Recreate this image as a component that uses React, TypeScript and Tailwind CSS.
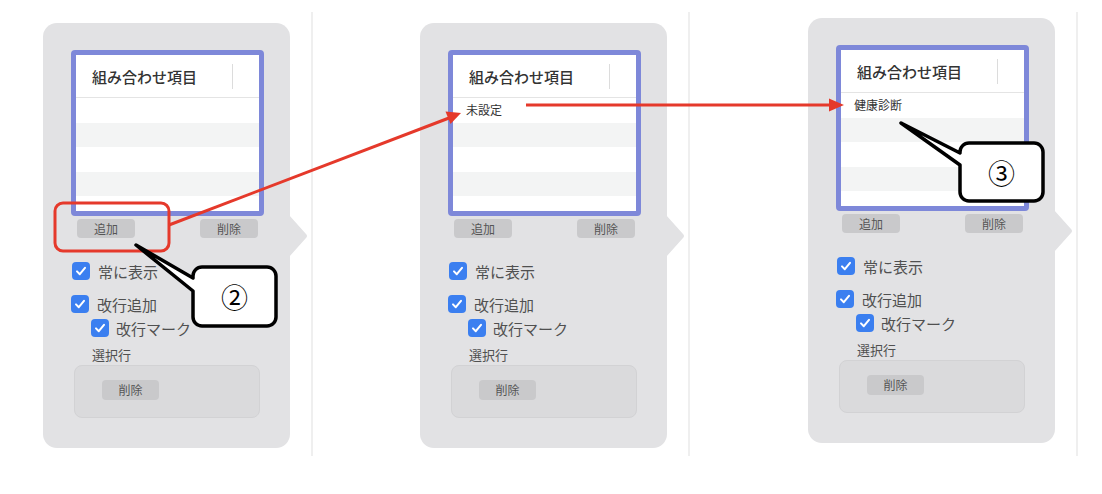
const jp = "font-['Noto_Sans_CJK_JP','Noto_Sans',sans-serif]";

function CheckBox() {
  return (
    <span className="flex h-[18px] w-[18px] items-center justify-center rounded-[4px] bg-[#3b7ff0]">
      <svg width="12" height="12" viewBox="0 0 12 12">
        <path d="M2 6.4 L4.8 9.2 L10 2.8" fill="none" stroke="white" strokeWidth="2" strokeLinecap="round" strokeLinejoin="round" />
      </svg>
    </span>
  );
}

function Btn({ label }: { label: string }) {
  return (
    <div className="flex h-[19px] w-[58px] items-center justify-center rounded-[4px] bg-[#c9c9cb] text-[12px] leading-none text-[#555]">
      {label}
    </div>
  );
}

function Panel({ item, top }: { item?: string; top: number }) {
  const rows = ["bg-white", "bg-[#f3f4f4]", "bg-white", "bg-[#f3f4f4]", "bg-white"];
  return (
    <div
      className={`relative h-[425px] w-[247px] shrink-0 rounded-[14px] bg-[#e2e2e4] pl-[28px] pt-[27px] ${top === 23 ? "mt-[23px]" : "mt-[18px]"}`}
    >
      {/* popover pointer */}
      <svg className="absolute left-[246px] top-[192px]" width="20" height="42" viewBox="0 0 20 42">
        <path d="M0 0 L17 19 Q19 21 17 23 L0 42 Z" fill="#e2e2e4" />
      </svg>

      <div className="flex h-[166px] w-[193px] flex-col overflow-hidden rounded-[4px] border-[5px] border-[#7e88d9] bg-white">
        <div className="flex h-[43px] shrink-0 items-center border-b border-[#e4e4e4] pl-[16px] pr-[26px]">
          <span className="text-[15px] font-medium leading-none text-[#333]">組み合わせ項目</span>
          <span className="ml-auto h-[25px] w-px bg-[#dcdcdc]" />
        </div>
        {rows.map((c, i) => (
          <div key={i} className={`flex h-[24.5px] shrink-0 items-center pl-[13px] text-[12px] text-[#333] ${c}`}>
            {i === 0 && item ? item : null}
          </div>
        ))}
      </div>

      <div className="mt-[3px] flex w-[193px] justify-between px-[6px]">
        <Btn label="追加" />
        <Btn label="削除" />
      </div>

      <div className="mt-[24px] flex h-[18px] items-center gap-[8px] pl-[1px]">
        <CheckBox />
        <span className="text-[15px] leading-none text-[#505050]">常に表示</span>
      </div>
      <div className="mt-[15px] flex h-[18px] items-center gap-[8px]">
        <CheckBox />
        <span className="text-[15px] leading-none text-[#505050]">改行追加</span>
      </div>
      <div className="mt-[6px] flex h-[18px] items-center gap-[7px] pl-[20px]">
        <CheckBox />
        <span className="text-[15px] leading-none text-[#505050]">改行マーク</span>
      </div>
      <div className="mt-[10px] pl-[21px] text-[13px] leading-[16px] text-[#505050]">選択行</div>
      <div className="ml-[3px] mt-[2px] h-[53px] w-[186px] rounded-[8px] border border-[#d2d2d4] bg-[#dadadc] pl-[27px] pt-[14px]">
        <div className="h-[20px] w-[57px] rounded-[4px] bg-[#c9c9cb] text-center text-[12px] leading-[20px] text-[#555]">削除</div>
      </div>
    </div>
  );
}

function Divider() {
  return <div className="ml-[21px] mt-[12px] h-[444px] w-[2px] shrink-0 bg-[#efefef]" />;
}

export default function App() {
  return (
    <div className={`relative h-[494px] w-[1102px] overflow-hidden bg-white ${jp}`}>
      <div className="flex items-start">
        <div className="ml-[43px] flex items-start">
          <Panel top={23} />
          <Divider />
        </div>
        <div className="ml-[107px] flex items-start">
          <Panel top={23} item="未設定" />
          <Divider />
        </div>
        <div className="ml-[118px] flex items-start">
          <Panel top={18} item="健康診断" />
          <Divider />
        </div>
      </div>

      {/* annotations */}
      <svg className="pointer-events-none absolute left-0 top-0" width="1102" height="494" viewBox="0 0 1102 494">
        <rect x="55" y="203" width="114" height="48" rx="8" fill="none" stroke="#e5392b" strokeWidth="3" />
        <line x1="169" y1="225" x2="449" y2="118" stroke="#e5392b" strokeWidth="3" />
        <polygon points="461,113 450.5,124 445.5,111.5" fill="#e5392b" />
        <line x1="526" y1="105" x2="831" y2="105" stroke="#e5392b" strokeWidth="3" />
        <polygon points="844,105 829,98.5 829,111.5" fill="#e5392b" />

        <path
          d="M202 267 H267 A9 9 0 0 1 276 276 V317 A9 9 0 0 1 267 326 H202 A9 9 0 0 1 193 317 V291 L136 245 L193 278 V276 A9 9 0 0 1 202 267 Z"
          fill="white"
          stroke="black"
          strokeWidth="3.5"
          strokeLinejoin="round"
        />
        <path
          d="M969 143 H1034 A9 9 0 0 1 1043 152 V192 A9 9 0 0 1 1034 201 H969 A9 9 0 0 1 960 192 V165 L901 123 L960 153 V152 A9 9 0 0 1 969 143 Z"
          fill="white"
          stroke="black"
          strokeWidth="3.5"
          strokeLinejoin="round"
        />
      </svg>
      <div className="absolute left-[193px] top-[267px] flex h-[59px] w-[83px] items-center justify-center text-[27px] leading-none text-black">
        ②
      </div>
      <div className="absolute left-[960px] top-[143px] flex h-[58px] w-[83px] items-center justify-center text-[27px] leading-none text-black">
        ③
      </div>
    </div>
  );
}
